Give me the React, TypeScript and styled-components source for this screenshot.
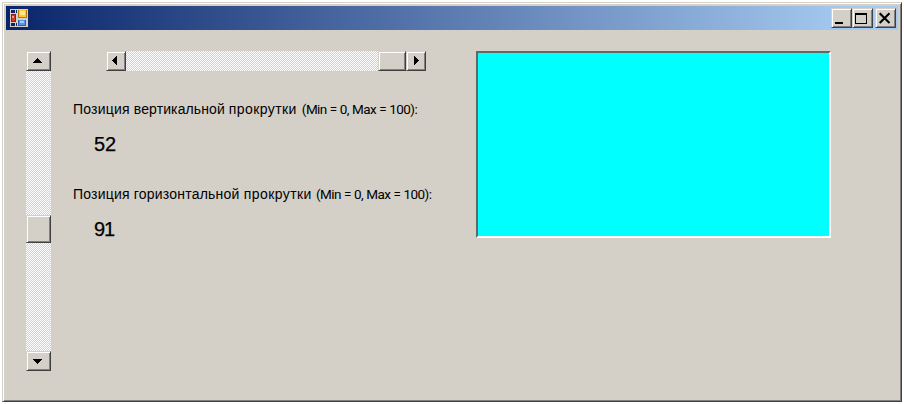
import React from "react";
import styled, { createGlobalStyle } from "styled-components";

const GlobalStyle = createGlobalStyle`
  * { box-sizing: border-box; }
  body { margin: 0; background: #fff; font-family: "Liberation Sans", Arial, sans-serif; }
`;

const Page = styled.div`
  width: 904px;
  height: 404px;
  padding: 2px;
  background: #fff;
  overflow: hidden;
`;

const WindowFrame = styled.div`
  height: 400px;
  border: 1px solid;
  border-color: #d4d0c8 #404040 #404040 #d4d0c8;
  box-shadow: inset 1px 1px #fff, inset -1px -1px #808080;
  background: #d4d0c8;
  padding: 3px;
  color: #000;
`;

const TitleBar = styled.header`
  height: 24px;
  display: flex;
  align-items: center;
  padding: 0 2px 0 4px;
  background: linear-gradient(to right, #0a246a, #a6caf0 95%);
`;

const CaptionButtons = styled.div`
  display: flex;
  margin-left: auto;
`;

const RaisedButton = styled.button<{ $width: number; $height: number; $gap?: number }>`
  width: ${(p) => p.$width}px;
  height: ${(p) => p.$height}px;
  flex: none;
  display: flex;
  align-items: center;
  justify-content: center;
  padding: 0;
  margin: 0 0 0 ${(p) => p.$gap ?? 0}px;
  border: 1px solid;
  border-color: #d4d0c8 #404040 #404040 #d4d0c8;
  box-shadow: inset 1px 1px #fff, inset -1px -1px #808080;
  background: #d4d0c8;
  border-radius: 0;
`;

const Client = styled.main`
  display: grid;
  grid-template-columns: 25px 22px 403px 355px;
  padding: 21px 0 0 20px;
  align-items: start;
`;

const ScrollTrack = styled.div<{ $vertical?: boolean }>`
  display: flex;
  flex-direction: ${(p) => (p.$vertical ? "column" : "row")};
  width: ${(p) => (p.$vertical ? 25 : 320)}px;
  height: ${(p) => (p.$vertical ? 320 : 20)}px;
  background: repeating-conic-gradient(#fff 0 25%, #d4d0c8 0 50%) 0 0 / 2px 2px;
`;

const TrackSpace = styled.div<{ $size: number }>`
  flex: 0 0 ${(p) => p.$size}px;
`;

const Readings = styled.section`
  grid-column: 3;
  display: flex;
  flex-direction: column;
`;

const HorizontalSlot = styled.div`
  padding-left: 33px;
  height: 50px;
`;

const Reading = styled.div`
  height: 85px;
`;

const Label = styled.div`
  display: flex;
  height: 16px;
  font-size: 14px;
  line-height: 16px;
  white-space: pre;
`;

const Word = styled.span<{ $width: number; $tracking: number }>`
  flex: 0 0 ${(p) => p.$width}px;
  letter-spacing: ${(p) => p.$tracking}px;
`;

const Range = styled.span`
  font-family: Roboto, "Liberation Sans", sans-serif;
  font-size: 13.5px;
  letter-spacing: -0.58px;
  word-spacing: 0.4px;
`;

const Value = styled.div<{ $tracking?: number }>`
  padding: 16px 0 0 21px;
  font-size: 20px;
  line-height: 23px;
  letter-spacing: ${(p) => p.$tracking ?? 0}px;
  -webkit-text-stroke: 0.25px #000;
`;

const ColorPanel = styled.div`
  width: 355px;
  height: 187px;
  border: 2px solid;
  border-color: #606868 #fff #fff #606868;
  background: #00ffff;
`;

const arrowShapes = {
  up: "M4 2h1v1H4zM3 3h3v1H3zM2 4h5v1H2zM1 5h7v1H1zM0 6h9v1H0z",
  down: "M0 2h9v1H0zM1 3h7v1H1zM2 4h5v1H2zM3 5h3v1H3zM4 6h1v1H4z",
  left: "M6 0v9H5V0zM5 1v7H4V1zM4 2v5H3V2zM3 3v3H2V3zM2 4v1H1V4z",
  right: "M3 0v9h1V0zM4 1v7h1V1zM5 2v5h1V2zM6 3v3h1V3zM7 4v1h1V4z",
};

const ArrowSvg = styled.svg<{ $dx: number; $dy: number }>`
  flex: none;
  margin: ${(p) => p.$dy}px 0 0 ${(p) => p.$dx}px;
`;

const ArrowIcon = ({ kind, dx = 0, dy = 0 }: { kind: keyof typeof arrowShapes; dx?: number; dy?: number }) => (
  <ArrowSvg $dx={dx} $dy={dy} width="9" height="9" viewBox="0 0 9 9" shapeRendering="crispEdges">
    <path d={arrowShapes[kind]} />
  </ArrowSvg>
);

const FormIcon = () => (
  <svg width="18" height="18" viewBox="0 0 18 18" shapeRendering="crispEdges">
    <path fill="#d4d0c8" d="M0 0h18v18H0z" />
    <path fill="#0a246a" d="M1 1h4v3H1zM6 1h1v3H6zM1 14h4v3H1zM6 14h1v3H6z" />
    <path fill="#8e1c18" d="M1 5h5v8H1z" />
    <path fill="#d33a26" d="M2 6h3v6H2z" />
    <path fill="#ee9a80" d="M2 7h2v2H2z" />
    <path fill="#b57b08" d="M8 1h9v8H8z" />
    <path fill="#ffc72b" d="M9 1h7v7H9z" />
    <path fill="#ffe78c" d="M10 2h5v4h-5z" />
    <path fill="#2d5faf" d="M8 11h8v6H8z" />
    <path fill="#5b93e8" d="M9 11h6v5H9z" />
    <path fill="#a4ccfa" d="M10 12h4v2h-4z" />
  </svg>
);

const CaptionIcon = ({ kind }: { kind: "minimize" | "maximize" | "close" }) => (
  <svg width="17" height="16" viewBox="0 0 17 16">
    {kind === "minimize" && <path d="M2 12h8v2H2z" />}
    {kind === "maximize" && <path fillRule="evenodd" d="M1 3h12v11H1zM2 5v8h10V5z" />}
    {kind === "close" && <path d="M2.7 3.2l9.8 9.8M12.5 3.2L2.7 13" stroke="#000" strokeWidth="2.1" />}
  </svg>
);

const rangeText = "(Min = 0, Max = 100):";

export default function App() {
  return (
    <Page>
      <GlobalStyle />
      <WindowFrame>
        <TitleBar>
          <FormIcon />
          <CaptionButtons>
            <RaisedButton $width={21} $height={20} aria-label="Свернуть"><CaptionIcon kind="minimize" /></RaisedButton>
            <RaisedButton $width={21} $height={20} aria-label="Развернуть"><CaptionIcon kind="maximize" /></RaisedButton>
            <RaisedButton $width={21} $height={20} $gap={2} aria-label="Закрыть"><CaptionIcon kind="close" /></RaisedButton>
          </CaptionButtons>
        </TitleBar>
        <Client>
          <ScrollTrack $vertical>
            <RaisedButton $width={25} $height={20}><ArrowIcon kind="up" dx={-2} dy={-1} /></RaisedButton>
            <TrackSpace $size={144} />
            <RaisedButton $width={25} $height={28} />
            <TrackSpace $size={108} />
            <RaisedButton $width={25} $height={20}><ArrowIcon kind="down" dx={-2} dy={1} /></RaisedButton>
          </ScrollTrack>
          <Readings>
            <HorizontalSlot>
              <ScrollTrack>
                <RaisedButton $width={20} $height={20}><ArrowIcon kind="left" dx={-1} dy={-1} /></RaisedButton>
                <TrackSpace $size={252} />
                <RaisedButton $width={28} $height={20} />
                <RaisedButton $width={20} $height={20}><ArrowIcon kind="right" dx={-1} dy={-1} /></RaisedButton>
              </ScrollTrack>
            </HorizontalSlot>
            <Reading>
              <Label>
                <Word $width={60} $tracking={0.2}>{"Позиция "}</Word>
                <Word $width={95} $tracking={0.1}>{"вертикальной "}</Word>
                <Word $width={73} $tracking={0.4}>{"прокрутки "}</Word>
                <Range>{rangeText}</Range>
              </Label>
              <Value>52</Value>
            </Reading>
            <Reading>
              <Label>
                <Word $width={60} $tracking={0.2}>{"Позиция "}</Word>
                <Word $width={110} $tracking={0.2}>{"горизонтальной "}</Word>
                <Word $width={72} $tracking={0.4}>{"прокрутки "}</Word>
                <Range>{rangeText}</Range>
              </Label>
              <Value $tracking={-1}>91</Value>
            </Reading>
          </Readings>
          <ColorPanel />
        </Client>
      </WindowFrame>
    </Page>
  );
}
